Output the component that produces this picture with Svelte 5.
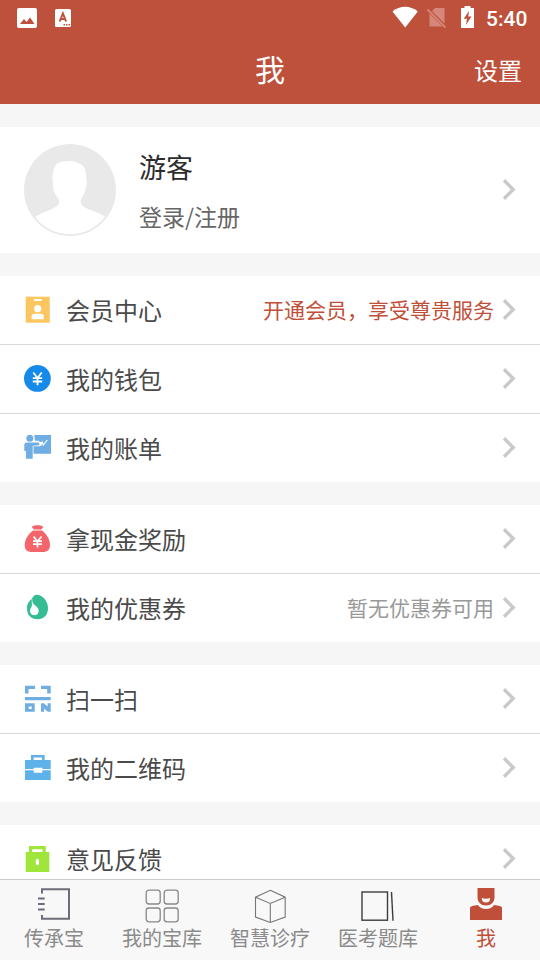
<script>
    const groups = [
        [
            { icon: 'member', label: '会员中心', note: '开通会员，享受尊贵服务', highlight: true },
            { icon: 'wallet', label: '我的钱包' },
            { icon: 'bill', label: '我的账单' }
        ],
        [
            { icon: 'reward', label: '拿现金奖励' },
            { icon: 'coupon', label: '我的优惠券', note: '暂无优惠券可用' }
        ],
        [
            { icon: 'scan', label: '扫一扫' },
            { icon: 'qrcode', label: '我的二维码' }
        ],
        [
            { icon: 'feedback', label: '意见反馈' }
        ]
    ];

    const tabs = [
        { icon: 'book', label: '传承宝' },
        { icon: 'grid', label: '我的宝库' },
        { icon: 'cube', label: '智慧诊疗' },
        { icon: 'exam', label: '医考题库' },
        { icon: 'me', label: '我' }
    ];

    let active = 'me';
</script>

{#snippet arrow()}
    <svg class="arrow" width="14" height="22" viewBox="0 0 14 22">
        <path d="M2 1.3 L11.2 10.5 L2 19.7" fill="none" stroke="#c9c9cb" stroke-width="3.4" />
    </svg>
{/snippet}

<div class="page">
    <header>
        <div class="status">
            <svg width="80" height="36" viewBox="0 0 80 36">
                <rect x="17" y="8" width="20" height="20" rx="2" fill="#fff" />
                <path d="M20 24 L24 19 L26.5 22 L30 17.5 L34.5 24 Z" fill="#bd513b" />
                <rect x="55" y="9" width="16" height="18" rx="1.5" fill="#fff" />
                <path d="M59.7 21.5 L62.9 13.5 L66.1 21.5 M61 19 H65" fill="none" stroke="#bd513b" stroke-width="2" />
                <path d="M63.5 24.8 H70" stroke="#bd513b" stroke-width="1.5" stroke-dasharray="1.5 1" />
            </svg>
            <div class="status-right">
                <svg width="86" height="36" viewBox="0 0 86 36">
                    <path d="M0.5 11.5 C8 5.3 18 5.3 25.8 11.5 L13.2 27.5 Z" fill="#fff" />
                    <path d="M43 8 H52.5 V23.5 L40 11 Z M37.5 13.5 L50.5 26.5 H37.5 Z" fill="#d4877a" />
                    <path d="M35.5 9.5 L53.5 27.5" stroke="#d4877a" stroke-width="1.8" />
                    <path d="M72.5 6 H78.5 V8 H82 V28 H69 V8 H72.5 Z" fill="#fff" />
                    <path d="M77 11 L71.7 18.8 H75 L74 25 L79.5 16.6 H76.3 Z" fill="#bd513b" />
                </svg>
                <span class="time">5:40</span>
            </div>
        </div>
        <div class="nav">
            <span></span>
            <h1>我</h1>
            <span class="settings">设置</span>
        </div>
    </header>

    <main>
        <section class="profile">
            <svg class="avatar" width="92" height="92" viewBox="0 0 92 92">
                <circle cx="46" cy="46" r="46" fill="#e9e9e9" />
                <path d="M11 73 C18 68 31 65 34 61 C36 58 35 56 34 54 C30 49 28.5 45 29 39 C27.5 34 29 27 31 22 C33 18 40 17 47 17 C51 17 53 19 56 20 C62 22 62 29 62.5 37 C63 44 60 51 57 55 C56 58 57 61 60 63 C66 67 76 68 81 73 A44.2 44.2 0 0 1 11 73 Z" fill="#fff" />
            </svg>
            <div class="user">
                <div class="name">游客</div>
                <div class="login">登录/注册</div>
            </div>
            {@render arrow()}
        </section>

        {#each groups as group}
            <section class="group">
                {#each group as item}
                    <div class="row">
                        <svg class="icon" width="28" height="28" viewBox="0 0 28 28">
                            {#if item.icon === 'member'}
                                <rect x="1.7" y="0.7" width="24" height="26" fill="#fbc55f" />
                                <path d="M10 4 H17.7" stroke="#fff" stroke-width="2" />
                                <circle cx="13.7" cy="12.7" r="3.6" fill="#fff" />
                                <path d="M7.7 23.3 V20.5 Q7.7 17.7 10.5 17.7 H17 Q19.7 17.7 19.7 20.5 V23.3 Z" fill="#fff" />
                            {:else if item.icon === 'wallet'}
                                <circle cx="13.4" cy="13.4" r="13.4" fill="#168ae8" />
                                <path d="M9.3 7.5 L13.5 13 L17.7 7.5 M13.5 13 V20.2 M8.8 13.2 H18.2 M8.8 16.5 H18.2" fill="none" stroke="#fff" stroke-width="1.8" />
                            {:else if item.icon === 'bill'}
                                <path d="M10.3 1 H27 V19.7 H9.5 V12.3 H15.5 L18 11 V8 H11 Z" fill="#6fade3" />
                                <circle cx="5.8" cy="4.3" r="3.5" fill="#6fade3" />
                                <path d="M0.3 11 Q0.3 8.4 3 8.4 H14.5 Q16.5 9.3 15 11.2 L8.7 11.8 V24.7 H2 V17 H0.3 Z" fill="#6fade3" />
                                <path d="M10 7.3 H15.3 M15.5 10 L18.2 8 L19.3 11 L23.3 6" fill="none" stroke="#fff" stroke-width="1.2" />
                            {:else if item.icon === 'reward'}
                                <path d="M7.7 2 Q9 -0.2 13.5 0.2 Q18 -0.2 19.3 2 L17.3 4.4 H10 Z" fill="#f4656b" />
                                <path d="M9 5.5 H18 C22 8.5 26 14 26 20 C26 25 23 27 19 27 H8 C3.5 27 0.7 25 0.7 20 C0.7 14 5 8.5 9 5.5 Z" fill="#f4656b" />
                                <path d="M9.5 11.5 L13.5 16.3 L17.5 11.5 M13.5 16 V22.5 M9 16.2 H18 M9 19.2 H18" fill="none" stroke="#fff" stroke-width="1.7" />
                            {:else if item.icon === 'coupon'}
                                <path d="M12.5 0.8 C19 1 24 7.5 24 14 C24 21 20 25.3 13.5 25.3 C7 25.3 3 21 3 14.5 C3 9.5 5 7 7.5 5.5 Q9.5 1 12.5 0.8 Z" fill="#34bd94" />
                                <path d="M8.3 4.8 C7.8 9 10 10.5 12.5 12.5 C16.5 16 14.5 21.3 10.6 21.3 C6 21.3 4.9 16.5 7.3 13.3 C9 10.5 6.8 8.5 8.3 4.8 Z" fill="#fff" />
                            {:else if item.icon === 'scan'}
                                <path d="M1 0.7 H11 V3.9 H4.5 V8.5 H1 Z M17 0.7 H26.7 V8.5 H23.2 V3.9 H17 Z M1 12 H26.7 V15.3 H1 Z" fill="#6fade3" />
                                <path fill-rule="evenodd" d="M1 18.3 H10.7 V26.7 H1 Z M4.7 21.5 V24 H7.7 V21.5 Z" fill="#6fade3" />
                                <path d="M17 18.3 H19.8 L23.6 21.6 V18.3 H26.7 V26.7 H23.8 L20 23.4 V26.7 H17 Z" fill="#6fade3" />
                            {:else if item.icon === 'qrcode'}
                                <path d="M8.3 7 V2.3 H19.3 V7" fill="none" stroke="#5fb1ea" stroke-width="2.6" />
                                <path d="M1 6 H26.7 V15 H18.3 V13.7 H9.7 V15 H1 Z M1 16.3 H9.7 V18.7 H18.3 V16.3 H26.7 V26 H1 Z" fill="#5fb1ea" />
                            {:else}
                                <path d="M6.6 8 V2.6 H20.2 V8" fill="none" stroke="#a0e53b" stroke-width="3.2" />
                                <rect x="1.7" y="7" width="23.6" height="20" fill="#a0e53b" />
                                <ellipse cx="13.4" cy="17" rx="1.7" ry="3.2" fill="#fff" />
                            {/if}
                        </svg>
                        <span class="label">{item.label}</span>
                        {#if item.note}
                            <span class="note" class:highlight={item.highlight}>{item.note}</span>
                        {/if}
                        {@render arrow()}
                    </div>
                {/each}
            </section>
        {/each}
    </main>

    <nav class="tabbar">
        {#each tabs as tab}
            <div class="tab" class:active={tab.icon === active}>
                <svg width="40" height="40" viewBox="0 0 40 40" fill="none">
                    {#if tab.icon === 'book'}
                        <path d="M8 7.5 V3.2 H35 V32.8 H8 V29" stroke="#6e6c78" stroke-width="2" />
                        <path d="M4 12.5 H10.7 M4 18 H10.7 M4 23.5 H10.7" stroke="#6e6c78" stroke-width="2.2" />
                    {:else if tab.icon === 'grid'}
                        <g stroke="#88888b" stroke-width="1.3">
                            <rect x="4.2" y="4.2" width="14" height="13.8" rx="2.8" />
                            <rect x="22.2" y="4.2" width="14" height="13.8" rx="2.8" />
                            <rect x="4.2" y="22" width="14" height="13.8" rx="2.8" />
                            <rect x="22.2" y="22" width="14" height="13.8" rx="2.8" />
                        </g>
                    {:else if tab.icon === 'cube'}
                        <path d="M20.3 4.3 L35.2 11.2 V31 L20.3 36.5 L5.5 31 V11.2 Z M5.5 11.2 L20.3 17.5 L35.2 11.2 M20.3 17.5 V36.5" stroke="#77777a" stroke-width="1.1" />
                    {:else if tab.icon === 'exam'}
                        <rect x="4" y="6" width="25.5" height="28.2" stroke="#3c3c3e" stroke-width="1.4" />
                        <path d="M33.5 6 L35 34.8" stroke="#3c3c3e" stroke-width="1.4" />
                    {:else}
                        <path d="M11.5 2 H28.5 V11 C28.5 16.5 25 19.5 20 19.5 C15 19.5 11.5 16.5 11.5 11 Z" fill="#bf4f39" />
                        <path d="M15.8 12 Q20 13.5 24 12 Q24.3 16.6 20 16.6 Q15.7 16.6 15.8 12 Z" fill="#f8f8f8" />
                        <path d="M4 34 V21.5 Q4.5 19.7 12 19 Q14.5 23 20 23 Q25.5 23 28 19 Q35.5 19.7 36 21.5 V34 Z" fill="#bf4f39" />
                    {/if}
                </svg>
                <span>{tab.label}</span>
            </div>
        {/each}
    </nav>
</div>

<style>
    :global(body) {
        margin: 0;
    }

    .page {
        display: flex;
        flex-direction: column;
        width: 540px;
        height: 960px;
        overflow: hidden;
        background: #f6f6f6;
        font-family: "Noto Sans CJK SC", sans-serif;
    }

    svg {
        display: block;
        flex-shrink: 0;
    }

    header {
        height: 104px;
        flex-shrink: 0;
        background: #bd513b;
        color: #fff;
    }

    .status {
        display: flex;
        justify-content: space-between;
        height: 36px;
    }

    .status-right {
        display: flex;
        padding-right: 12px;
    }

    .time {
        width: 42px;
        margin-left: 8px;
        font: 500 21px/38px Roboto, sans-serif;
        white-space: nowrap;
    }

    .nav {
        display: grid;
        grid-template-columns: 1fr auto 1fr;
        align-items: center;
        height: 66px;
        padding: 0 18px;
    }

    h1 {
        margin: 0;
        padding-bottom: 2px;
        font-size: 30px;
        font-weight: 400;
        line-height: 44px;
    }

    .settings {
        text-align: right;
        font-size: 24px;
    }

    main {
        flex: 1;
        min-height: 0;
        overflow: hidden;
        padding-top: 23px;
    }

    .profile {
        display: flex;
        align-items: center;
        height: 126px;
        padding: 0 24px;
        background: #fff;
    }

    .user {
        flex: 1;
        margin-left: 23px;
    }

    .name {
        padding-top: 2px;
        font-size: 27px;
        line-height: 50px;
        color: #2c2c2c;
    }

    .login {
        font-size: 23px;
        line-height: 48px;
        color: #666;
    }

    .group {
        margin-top: 23px;
        background: #fff;
    }

    .row {
        display: flex;
        align-items: center;
        height: 68px;
        padding: 0 24px;
    }

    .row + .row {
        border-top: 1px solid #d9d9d9;
    }

    .label {
        flex: 1;
        margin-left: 14px;
        padding-bottom: 2px;
        font-size: 24px;
        color: #4a4a4a;
    }

    .note {
        margin-right: 8px;
        padding-bottom: 2px;
        font-size: 21px;
        color: #999;
    }

    .note.highlight {
        color: #bf4f39;
    }

    .tabbar {
        display: flex;
        flex-shrink: 0;
        height: 80px;
        border-top: 1px solid #cbcbcd;
        background: #f8f8f8;
    }

    .tab {
        flex: 1;
        display: flex;
        flex-direction: column;
        align-items: center;
        padding-top: 6px;
        font-size: 20px;
        line-height: 24px;
        color: #8a8a8a;
    }

    .tab.active {
        color: #bf4f39;
    }
</style>
